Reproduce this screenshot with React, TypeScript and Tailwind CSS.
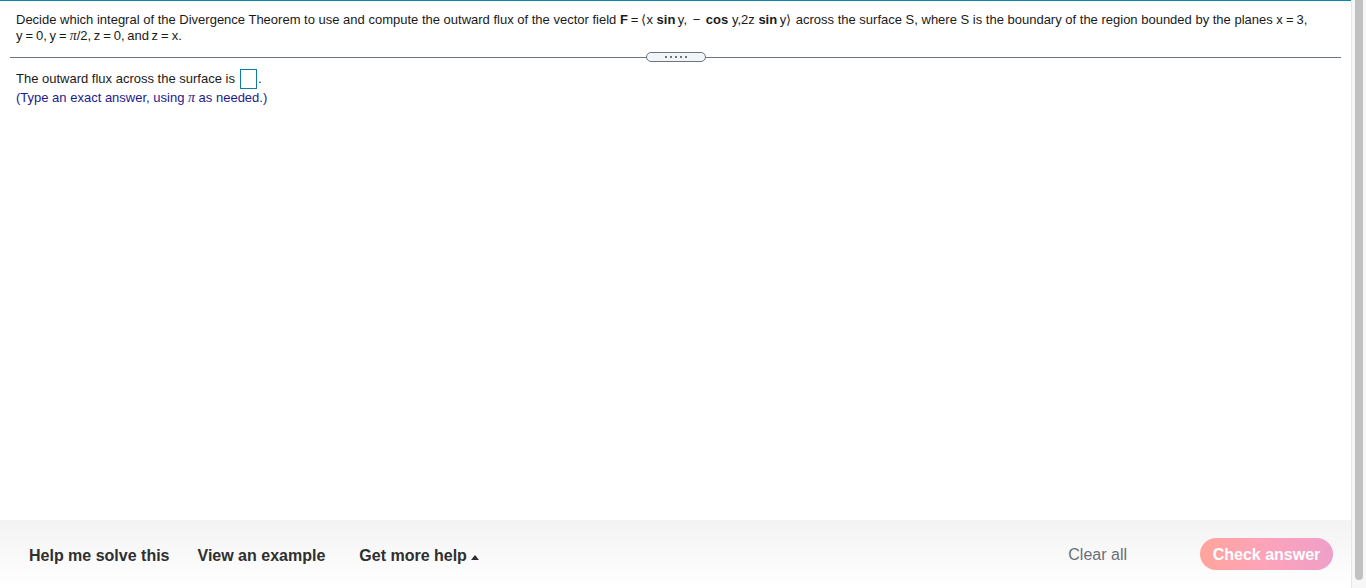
function Eq() {
  return <span className="mx-[3px]">=</span>;
}

function Pi() {
  return <i className="font-['Liberation_Serif',serif] text-[14px]">{'\u03C0'}</i>;
}

export default function App() {
  return (
    <div className="flex h-[588px] w-[1366px] overflow-hidden bg-white font-['Liberation_Sans',Arial,sans-serif]">
      <div className="flex w-[1351px] flex-col">
        <div className="h-px shrink-0 bg-[#0b86ad]" />

        <div className="flex-1 overflow-hidden">
          <div className="px-4 pt-[11px] text-[13px] leading-4 text-[#1a1a1a]">
            <p className="whitespace-pre">
              Decide which integral of the Divergence Theorem to use and compute the outward flux of the vector field{' '}
              <b>F</b>
              <Eq />
              {'\u27E8'}x <b>sin</b>
              <span className="ml-[2.5px]">y,</span> <span className="mx-[2px]">{'\u2212'}</span> <b>cos</b> y,2z <b>sin</b>
              <span className="ml-[2.5px]">y</span>
              {'\u27E9'}
              <span className="ml-px"> across the surface S, where S is the boundary of the region bounded by the planes x</span>
              <Eq />3,
            </p>
            <p className="whitespace-nowrap [word-spacing:-1px]">
              y<Eq />0, y<Eq />
              <Pi />/2, z<Eq />0, and z<Eq />x.
            </p>
          </div>

          <div className="relative mx-[10px] mt-[13px] h-px bg-[#6b7480]">
            <div className="absolute left-[636px] top-[-5px] flex h-[10px] w-[60px] items-center justify-center gap-[3px] rounded-full border border-[#6b7480] bg-[#f2f5f8]">
              {[0, 1, 2, 3, 4].map((n) => (
                <span key={n} className="h-[2px] w-[2px] bg-[#6b7480]" />
              ))}
            </div>
          </div>

          <div className="px-4 pt-[11px] text-[13px] text-[#1a1a1a]">
            <div className="flex h-[20px] items-center whitespace-nowrap">
              The outward flux across the surface is
              <span className="ml-[5px] h-[20px] w-[17px] border border-[#0b7ea3]" />
              <span className="ml-px">.</span>
            </div>
            <p className="mt-px whitespace-nowrap leading-4 text-[#1c1a8c]">
              (Type an exact answer, using <Pi /> as needed.)
            </p>
          </div>
        </div>

        <div className="flex h-[68px] shrink-0 items-center bg-gradient-to-b from-[#f3f3f3] to-white pl-[29px] pr-[18px]">
          <button className="pt-[3px] text-[16px] font-bold text-[#2f2f2f]">Help me solve this</button>
          <button className="ml-[28px] pt-[3px] text-[16px] font-bold text-[#2f2f2f]">View an example</button>
          <button className="ml-[34px] flex items-center pt-[3px] text-[16px] font-bold text-[#2f2f2f]">
            Get more help
            <svg className="ml-[4px] mt-[3px]" width="8" height="5" viewBox="0 0 8 5">
              <path d="M4 0 L8 5 L0 5 Z" fill="#2f2f2f" />
            </svg>
          </button>
          <button className="ml-auto pt-px text-[16px] text-[#6b7078]">Clear all</button>
          <button className="ml-[73px] h-[32px] w-[133px] rounded-full bg-gradient-to-r from-[#ffa59a] via-[#fda3bb] to-[#ef9fc8] pt-px text-[16px] font-bold text-white">
            Check answer
          </button>
        </div>
      </div>

      <div className="flex w-[15px] shrink-0 justify-center border-l border-[#e6e6e6] bg-[#f7f7f7]">
        <div className="h-[580px] w-[8px] rounded-b-full bg-[#c1c1c1]" />
      </div>
    </div>
  );
}
